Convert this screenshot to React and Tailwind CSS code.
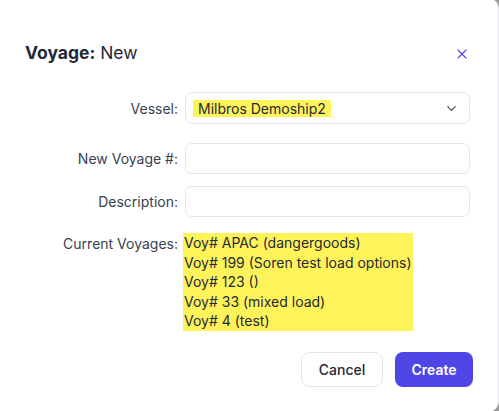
import React from 'react';
import { ChevronDown, X } from 'lucide-react';

const voyages = [
  'Voy# APAC (dangergoods)',
  'Voy# 199 (Soren test load options)',
  'Voy# 123 ()',
  'Voy# 33 (mixed load)',
  'Voy# 4 (test)'
];

const App = () => {
  return (
    <div
      className="w-[499px] h-[411px] overflow-hidden bg-[#9b9b9b]"
      style={{ fontFamily: 'Inter, "Liberation Sans", sans-serif' }}
    >
      <div className="ml-[-8px] mt-[-3px] w-[507px] h-[416px] rounded-[12px] bg-white border border-[#e5e7eb] pl-[32px] pr-[28px]">
        {/* Header */}
        <div className="mt-[41px] flex items-center justify-between h-[28px]">
          <h2 className="text-[17.5px] leading-[28px] text-[#1f2937]">
            <span className="font-bold">Voyage:</span> New
          </h2>
          <button className="mr-[0px] mt-[2px] text-[#4f46e5]">
            <X className="w-[16px] h-[16px]" strokeWidth={1.6} />
          </button>
        </div>

        {/* Form */}
        <div className="mt-[25px] grid grid-cols-[153px_285px] gap-x-[7px] text-[14px] text-[#374151]">
          <label className="self-center text-right">Vessel:</label>
          <div className="h-[32px] rounded-[7px] border border-[#e5e7eb] flex items-center justify-between pl-[7px] pr-[10px]">
            <span className="bg-[#fff35a] text-[#1f2937] px-[5px] leading-[17px]">Milbros Demoship2</span>
            <ChevronDown className="w-[15px] h-[15px] text-[#4b5563]" strokeWidth={2} />
          </div>

          <label className="mt-[19px] self-center text-right">New Voyage #:</label>
          <input className="mt-[19px] h-[31px] rounded-[7px] border border-[#e5e7eb] outline-none px-[8px]" />

          <label className="mt-[12px] self-center text-right">Description:</label>
          <input className="mt-[12px] h-[31px] rounded-[7px] border border-[#e5e7eb] outline-none px-[8px]" />

          <label className="mt-[16px] text-right leading-[19.6px] pt-[1px]">Current Voyages:</label>
          <div className="mt-[16px] ml-[-2px]">
            <div className="w-fit bg-[#fff35a] text-[#1f2937] leading-[19.6px] pl-[1px] pr-[1px]">
              {voyages.map((v) => (
                <div key={v}>{v}</div>
              ))}
            </div>
          </div>
        </div>

        {/* Footer */}
        <div className="mt-[21px] flex justify-end gap-[12px] mr-[-3px]">
          <button className="h-[35px] w-[82px] rounded-[8px] border border-[#e5e7eb] bg-white text-[14px] font-medium text-[#1f2937]">
            Cancel
          </button>
          <button className="h-[35px] w-[78px] rounded-[8px] bg-[#4f46e5] text-[14px] font-semibold text-white">
            Create
          </button>
        </div>
      </div>
    </div>
  );
};

export default App;
